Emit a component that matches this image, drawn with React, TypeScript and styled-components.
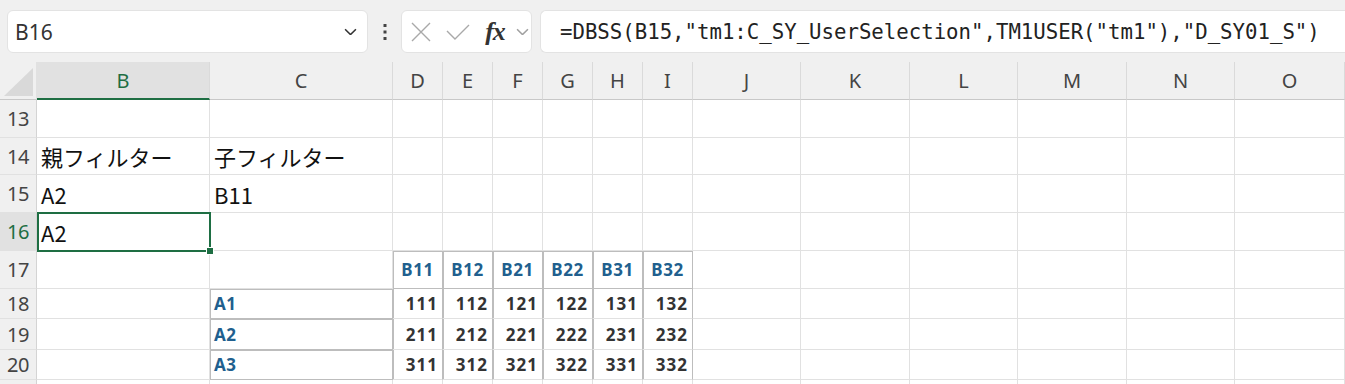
import React from 'react';
import styled, { createGlobalStyle } from 'styled-components';

const GlobalStyle = createGlobalStyle`
  body {
    margin: 0;
    background: #ffffff;
    overflow: hidden;
    font-family: 'Noto Sans', 'Noto Sans CJK JP', sans-serif;
  }
`;

const GRID = '#e1e1e1';
const EDGE = '#bdbdbd';
const GREEN = '#1e6e43';
const BLUE = '#215f8e';

const Page = styled.div`
  width: 1345px;
  height: 384px;
  overflow: hidden;
`;

const Toolbar = styled.div`
  display: flex;
  align-items: flex-start;
  height: 62px;
  padding: 10px 0 0 7px;
  box-sizing: border-box;
  background: #f0f0f0;
`;

const NameBox = styled.div`
  width: 361px;
  height: 43px;
  box-sizing: border-box;
  display: flex;
  align-items: center;
  justify-content: space-between;
  padding: 0 10px 0 7px;
  background: #fff;
  border: 1px solid #e3e3e3;
  border-radius: 6px;
  font-size: 21px;
  color: #333;
`;

const DotsWrap = styled.div`
  width: 33px;
  height: 43px;
  display: flex;
  align-items: center;
  justify-content: center;
`;

const IconBox = styled.div`
  width: 131px;
  height: 43px;
  box-sizing: border-box;
  display: flex;
  align-items: center;
  background: #fff;
  border: 1px solid #e3e3e3;
  border-radius: 6px;
`;

const IconSlot = styled.div<{ $w: number }>`
  width: ${(p) => p.$w}px;
  display: flex;
  align-items: center;
  justify-content: center;
`;

const Fx = styled.span`
  font-family: 'Liberation Serif', serif;
  font-style: italic;
  font-weight: bold;
  font-size: 26px;
  color: #333;
  letter-spacing: -1px;
`;

const Divider = styled.div`
  width: 8px;
`;

const FormulaBar = styled.div`
  flex: 1;
  height: 43px;
  box-sizing: border-box;
  display: flex;
  align-items: center;
  padding-left: 19px;
  background: #fff;
  border: 1px solid #e3e3e3;
  border-right: none;
  border-radius: 6px 0 0 6px;
  font-family: 'DejaVu Sans Mono', 'Liberation Mono', monospace;
  font-size: 20.7px;
  color: #222;
  white-space: nowrap;
`;

const Sheet = styled.div`
  display: grid;
  grid-template-columns: 37px 173px 183px repeat(6, 50px) 108px 109px 108px 109px 108px 110px;
  grid-template-rows: 38px 38px 37px 38px 38px 38px 30px 31px 30px 10px;
`;

const Corner = styled.div`
  background: #f0f0f0;
  border-right: 1px solid ${GRID};
  border-bottom: 1px solid #c8c8c8;
  display: flex;
  align-items: flex-end;
  justify-content: flex-end;
  padding: 0 3px 3px 0;
`;

const ColHead = styled.div<{ $active?: boolean }>`
  background: ${(p) => (p.$active ? '#e1e1e1' : '#f0f0f0')};
  border-right: 1px solid #dadada;
  border-bottom: ${(p) => (p.$active ? `2px solid ${GREEN}` : '1px solid #c8c8c8')};
  display: flex;
  align-items: center;
  justify-content: center;
  font-size: 20px;
  color: ${(p) => (p.$active ? GREEN : '#444')};
`;

const RowHead = styled.div<{ $active?: boolean }>`
  background: ${(p) => (p.$active ? '#e1e1e1' : '#f0f0f0')};
  border-right: 1px solid #d4d4d4;
  border-bottom: 1px solid ${GRID};
  display: flex;
  align-items: center;
  justify-content: center;
  font-size: 20px;
  letter-spacing: -0.5px;
  color: ${(p) => (p.$active ? GREEN : '#444')};
`;

type Boxed = 'all' | 'sides' | undefined;
type Kind = 'text' | 'head' | 'num' | 'label';

const boxShadow = (b: Boxed) =>
  b === 'all' ? `inset 1px 1px 0 ${EDGE}` : b === 'sides' ? `inset 1px 0 0 ${EDGE}` : 'none';

const isPlain = (k?: Kind) => k === 'text' || !k;

const Cell = styled.div<{ $boxed?: Boxed; $kind?: Kind }>`
  position: relative;
  box-sizing: border-box;
  border-right: 1px solid ${(p) => (p.$boxed ? EDGE : GRID)};
  border-bottom: 1px solid ${(p) => (p.$boxed === 'all' ? EDGE : GRID)};
  box-shadow: ${(p) => boxShadow(p.$boxed)};
  display: flex;
  align-items: center;
  white-space: nowrap;
  justify-content: ${(p) =>
    p.$kind === 'head' ? 'center' : p.$kind === 'num' ? 'flex-end' : 'flex-start'};
  padding: ${(p) => (p.$kind === 'num' ? '0 4px 0 0' : p.$kind === 'head' ? '0' : '0 0 0 4px')};
  font-family: ${(p) =>
    isPlain(p.$kind) ? "'Noto Sans CJK JP', 'Noto Sans', sans-serif" : "'Noto Sans', 'Open Sans', sans-serif"};
  font-size: ${(p) => (isPlain(p.$kind) ? '22px' : '17px')};
  font-weight: ${(p) => (isPlain(p.$kind) ? 400 : 700)};
  letter-spacing: ${(p) => (p.$kind === 'num' ? '1px' : isPlain(p.$kind) ? '0' : '0.5px')};
  color: ${(p) => (p.$kind === 'head' || p.$kind === 'label' ? BLUE : p.$kind === 'num' ? '#333' : '#111')};
`;

const Selection = styled.div`
  position: absolute;
  top: -1px;
  left: 0;
  right: -2px;
  bottom: -2px;
  border: 2px solid ${GREEN};
  z-index: 2;
  pointer-events: none;
`;

const Handle = styled.div`
  position: absolute;
  right: -5px;
  bottom: -5px;
  width: 6px;
  height: 6px;
  background: ${GREEN};
  border: 1px solid #fff;
`;

const Chevron = ({ color, size }: { color: string; size: number }) => (
  <svg width={size} height={size * 0.6} viewBox="0 0 12 7">
    <polyline points="1,1 6,6 11,1" fill="none" stroke={color} strokeWidth="1.4" />
  </svg>
);

const columns = ['B', 'C', 'D', 'E', 'F', 'G', 'H', 'I', 'J', 'K', 'L', 'M', 'N', 'O'];

type CellDef = { text?: string; boxed?: Boxed; kind?: Kind; selected?: boolean };

const heads = ['B11', 'B12', 'B21', 'B22', 'B31', 'B32'];

const rows: { n: number; label?: string; cells: CellDef[] }[] = [
  { n: 13, cells: [] },
  { n: 14, cells: [{ text: '親フィルター' }, { text: '子フィルター' }] },
  { n: 15, cells: [{ text: 'A2' }, { text: 'B11' }] },
  { n: 16, cells: [{ text: 'A2', selected: true }] },
  { n: 17, cells: [{}, {}, ...heads.map((h) => ({ text: h, boxed: 'all' as Boxed, kind: 'head' as Kind }))] },
  ...[1, 2, 3].map((a) => ({
    n: 17 + a,
    cells: [
      {},
      { text: `A${a}`, boxed: 'all' as Boxed, kind: 'label' as Kind },
      ...[1, 2, 3].flatMap((b) =>
        [1, 2].map((c) => ({ text: `${a}${b}${c}`, boxed: 'sides' as Boxed, kind: 'num' as Kind }))
      ),
    ],
  })),
  // row 21 is only a sliver at the bottom edge; its number is not visible
  { n: 21, label: '', cells: [] },
];

export default function App() {
  return (
    <Page>
      <GlobalStyle />
      <Toolbar>
        <NameBox>
          <span>B16</span>
          <Chevron color="#333" size={13} />
        </NameBox>
        <DotsWrap>
          <svg width="4" height="18" viewBox="0 0 4 18">
            <rect x="0.5" y="1" width="3" height="3" fill="#444" />
            <rect x="0.5" y="7.5" width="3" height="3" fill="#444" />
            <rect x="0.5" y="14" width="3" height="3" fill="#444" />
          </svg>
        </DotsWrap>
        <IconBox>
          <IconSlot $w={38}>
            <svg width="20" height="20" viewBox="0 0 20 20">
              <path d="M1 1 L19 19 M19 1 L1 19" stroke="#a9a9a9" strokeWidth="1.4" fill="none" />
            </svg>
          </IconSlot>
          <IconSlot $w={36}>
            <svg width="24" height="16" viewBox="0 0 24 16">
              <polyline points="1,7 9,15 23,1" stroke="#a9a9a9" strokeWidth="1.4" fill="none" />
            </svg>
          </IconSlot>
          <IconSlot $w={38}>
            <Fx>fx</Fx>
          </IconSlot>
          <IconSlot $w={17}>
            <Chevron color="#a0a0a0" size={13} />
          </IconSlot>
        </IconBox>
        <Divider />
        <FormulaBar>=DBSS(B15,"tm1:C_SY_UserSelection",TM1USER("tm1"),"D_SY01_S")</FormulaBar>
      </Toolbar>
      <Sheet>
        <Corner>
          <svg width="29" height="28" viewBox="0 0 29 28">
            <polygon points="29,0 29,28 0,28" fill="#d9d9d9" />
          </svg>
        </Corner>
        {columns.map((c) => (
          <ColHead key={c} $active={c === 'B'}>
            {c}
          </ColHead>
        ))}
        {rows.map((r) => (
          <React.Fragment key={r.n}>
            <RowHead $active={r.n === 16}>{r.label ?? r.n}</RowHead>
            {columns.map((c, i) => {
              const def = r.cells[i] || {};
              return (
                <Cell key={c} $boxed={def.boxed} $kind={def.kind}>
                  {def.text}
                  {def.selected && (
                    <Selection>
                      <Handle />
                    </Selection>
                  )}
                </Cell>
              );
            })}
          </React.Fragment>
        ))}
      </Sheet>
    </Page>
  );
}
